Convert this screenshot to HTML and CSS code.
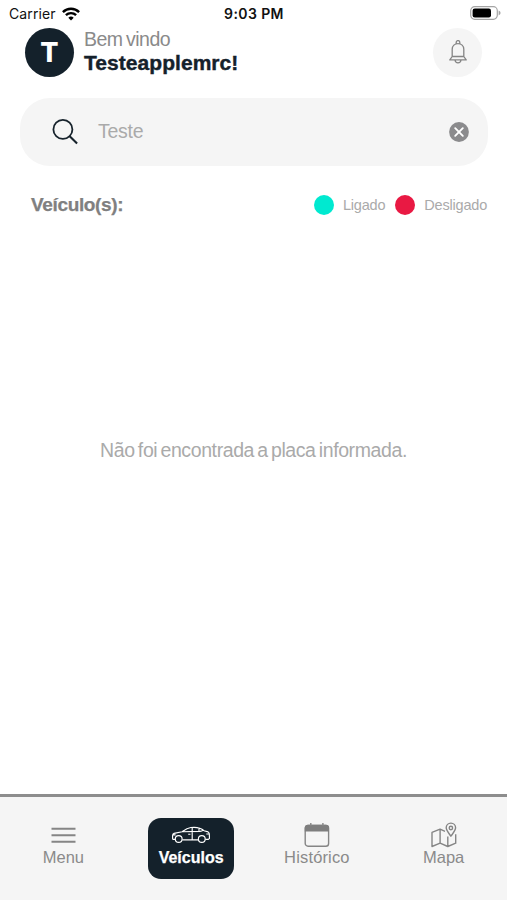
FILE: index.html
```html
<!DOCTYPE html>
<html lang="pt-BR">
<head>
<meta charset="utf-8">
<title>Veículos</title>
<link rel="stylesheet" href="styles.css">
</head>
<body>
<div class="status">
  <div class="carrier"><span>Carrier</span>
    <svg width="18" height="14" viewBox="0 0 18 14" fill="none" stroke="#000" stroke-width="2.4"><path d="M.9 5.1a11.6 11.6 0 0 1 16.2 0M3.9 8.2a7.3 7.3 0 0 1 10.2 0"/><path d="M6.3 10.7a3.9 3.9 0 0 1 5.4 0L9 13.4Z" fill="#000" stroke="none"/></svg>
  </div>
  <div class="time">9:03 PM</div>
  <svg class="battery" width="31" height="14" viewBox="0 0 31 14"><rect x=".7" y=".7" width="26.6" height="12.6" rx="4" fill="none" stroke="#a5a5a5" stroke-width="1.2"/><rect x="2.6" y="2.5" width="18.4" height="9" rx="2.2"/><path d="M28.6 4.6q2 1 2 2.4t-2 2.4z" fill="#a5a5a5"/></svg>
</div>
<header class="header">
  <div class="avatar">T</div>
  <div class="greeting"><div class="hello">Bem vindo</div><div class="name">Testeapplemrc!</div></div>
  <div class="bell">
    <svg width="18" height="24" viewBox="0 0 18 24" fill="none" stroke="#858585" stroke-width="1.3" stroke-linejoin="round"><path d="M3.2 16.5V9.2C3.2 5.8 5.7 3.6 9 3.6s5.8 2.2 5.8 5.6v7.3M3.2 16.5h11.6l2.4 3.4H.8zM7.2 3.7V2.4a1.8 1.8 0 0 1 3.6 0v1.3M6 20c.2 1.8 1.4 2.9 3 2.9s2.8-1.1 3-2.9"/></svg>
  </div>
</header>
<div class="search">
  <svg class="lens" width="26" height="26" viewBox="0 0 26 26" fill="none" stroke="#17232c" stroke-width="1.8"><circle cx="10.9" cy="10.4" r="9.5"/><path d="m17.7 17.2 7.4 7.2" stroke-width="2.1"/></svg>
  <span class="query">Teste</span>
  <svg width="20" height="20" viewBox="0 0 20 20"><circle cx="10" cy="10" r="9.9" fill="#8b8b8d"/><path d="m6.2 6.2 7.6 7.6m0-7.6-7.6 7.6" stroke="#fff" stroke-width="1.9" stroke-linecap="round"/></svg>
</div>
<div class="legend">
  <span class="title">Veículo(s):</span>
  <i class="dot on"></i><span class="label">Ligado</span>
  <i class="dot off"></i><span class="label last">Desligado</span>
</div>
<main class="empty">Não foi encontrada a placa informada.</main>
<nav class="tabs">
  <div class="tab">
    <svg width="26" height="26" viewBox="0 0 26 26" stroke="#858585" stroke-width="1.9"><path d="M1.5 6.8h24M1.5 13.3h24M1.5 19.7h24"/></svg>
    <span>Menu</span>
  </div>
  <div class="tab active">
    <svg width="38" height="26" viewBox="0 0 38 26" fill="none" stroke="#fff" stroke-width="1.15" stroke-linejoin="round"><circle cx="6.7" cy="17" r="3.4"/><circle cx="29.8" cy="17" r="3.4"/><path d="M3.1 17.4H1.5q-.9 0-.9-1v-3q0-1.5 1.5-2l8-1.7c2.5-1.8 5-3.7 8.7-4.2 6-.7 10 .2 13.2 3.2l4.1 1.2q1 .5 1.2 2l.2 4.5-1.1 1h-3M10.3 17.8h15.9M10.1 9.7 28 9.4q2-.1 3-1M20.2 5.4v12M27 6v3.1M16.2 12.2h2.3M1 12.8h2.6M34.3 12h2.8"/></svg>
    <span>Veículos</span>
  </div>
  <div class="tab">
    <svg width="26" height="26" viewBox="0 0 26 26"><rect x="1.2" y="3.4" width="23.4" height="20.8" rx="2.8" fill="none" stroke="#858585" stroke-width="1.4"/><path d="M.8 9.6V5.8Q.8 2.8 4 2.8h18q3 0 3 3v3.8z" fill="#7e7e7e"/><path d="M6.8 1v3M18.9 1v3" stroke="#858585" stroke-width="1.4"/></svg>
    <span class="wide">Histórico</span>
  </div>
  <div class="tab">
    <svg width="26" height="26" viewBox="0 0 26 26" fill="none" stroke="#858585" stroke-width="1.4" stroke-linejoin="round"><path d="M14 9.3 9.1 7.1 1 10.4v14.1l8.1-3.3 7.7 3.3 7.9-3.3v-9M9.1 7.1v14.1M16.8 14.5v10"/><path d="M19.9 14.2c-2.7-3.7-4.7-6-4.7-8.4a4.7 4.7 0 0 1 9.4 0c0 2.4-2 4.7-4.7 8.4Z"/><circle cx="19.9" cy="6" r="1.7"/></svg>
    <span>Mapa</span>
  </div>
</nav>
</body>
</html>
```
FILE: styles.css
```css
* { box-sizing: border-box; }
body {
  margin: 0;
  height: 900px;
  display: flex;
  flex-direction: column;
  background: #fff;
  color: #8a8a8a;
  font-family: "Liberation Sans", Arial, sans-serif;
}
svg { display: block; flex: none; }
.status {
  height: 27px;
  padding: 0 6px 0 9px;
  display: grid;
  grid-template-columns: 1fr auto 1fr;
  align-items: center;
  color: #111;
  font: 14px/27px Inter, sans-serif;
}
.carrier { display: flex; align-items: center; gap: 6px; letter-spacing: .1px; }
.time { margin-right: 2px; font-weight: 600; letter-spacing: .4px; }
.battery { justify-self: end; margin-top: -1px; }
.header {
  height: 50px;
  padding: 0 25px;
  display: flex;
  align-items: center;
}
.avatar, .bell {
  width: 49px;
  height: 49px;
  border-radius: 50%;
  display: flex;
  align-items: center;
  justify-content: center;
}
.avatar { background: #14212b; color: #fff; font: 800 27px/49px Inter, sans-serif; }
.greeting { margin: -2px 0 0 10px; flex: 1; }
.hello { font-size: 19.5px; line-height: 23px; letter-spacing: -.5px; word-spacing: -1.5px; }
.name {
  color: #14212b;
  font-size: 21px;
  font-weight: 700;
  line-height: 23px;
  letter-spacing: .05px;
  -webkit-text-stroke: .4px #14212b;
}
.bell { background: #f5f5f5; }
.search {
  height: 68px;
  margin: 21px 19px 0 20px;
  padding: 0 19px 1px 32px;
  border-radius: 30px;
  background: #f5f5f5;
  display: flex;
  align-items: center;
}
.query { flex: 1; margin-left: 20px; font-size: 19.5px; letter-spacing: -.25px; color: #aaa; }
.legend {
  height: 40px;
  margin: 19px 20px 0 31px;
  display: flex;
  align-items: center;
}
.title { flex: 1; font-size: 19px; font-weight: 700; letter-spacing: -.35px; color: #808080; -webkit-text-stroke: .25px #808080; }
.dot { width: 20px; height: 20px; border-radius: 50%; }
.on { background: #00e9d0; }
.off { background: #e91943; }
.label { margin: 0 10px 0 9px; font-size: 14.5px; line-height: 18px; padding-bottom: 1px; letter-spacing: -.2px; color: #aaa; }
.last { margin-right: 0; }
.empty {
  flex: 1;
  padding-top: 213px;
  text-align: center;
  font-size: 19.5px;
  line-height: 24px;
  letter-spacing: -.4px;
  word-spacing: -1.8px;
  color: #aaa;
}
.tabs {
  height: 106px;
  border-top: 3px solid #8d8d8d;
  background: #f5f5f5;
  display: grid;
  grid-template-columns: repeat(4, 1fr);
  justify-items: center;
  align-items: start;
}
.tab {
  width: 86px;
  height: 61px;
  margin-top: 21px;
  padding-top: 4px;
  display: flex;
  flex-direction: column;
  align-items: center;
  border-radius: 13px;
  font-size: 16.5px;
  line-height: 19px;
}
.active { position: relative; left: 1px; background: #14212b; color: #fff; font-size: 16px; font-weight: 700; -webkit-text-stroke: .25px #fff; }
.wide { letter-spacing: .15px; }
```
